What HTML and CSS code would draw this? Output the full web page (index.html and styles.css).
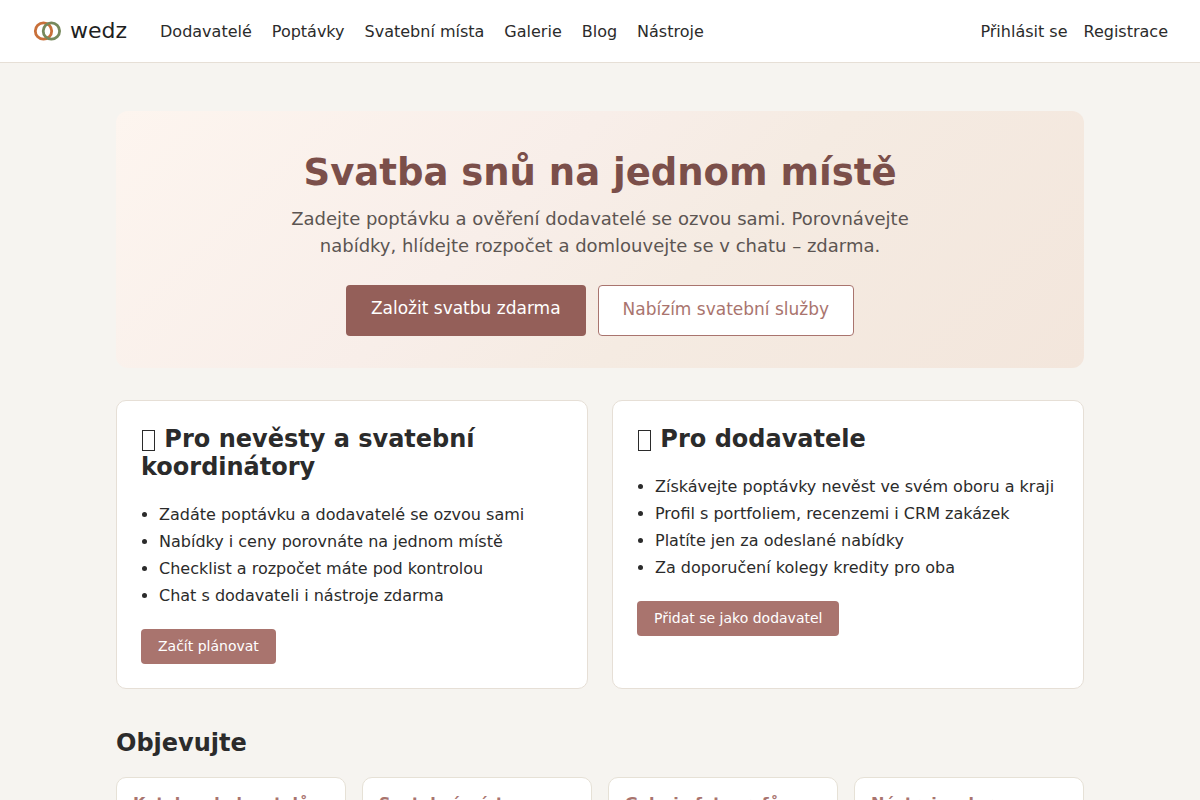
FILE: index.html
```html
<!DOCTYPE html>
<html lang="cs">
<head>
    <meta charset="UTF-8">
    <meta name="viewport" content="width=device-width, initial-scale=1.0">
    <title>wedz</title>
    <link rel="stylesheet" href="styles.css">
</head>
<body>
    <header class="header">
        <a class="logo" href="#">
            <svg width="30" height="24" viewBox="0 0 30 24" fill="none" stroke-width="2.8" aria-hidden="true">
                <circle cx="11.5" cy="12" r="8.2" stroke="#c8703a"/>
                <circle cx="19.4" cy="12" r="8.2" stroke="#76895c"/>
            </svg>
            wedz
        </a>
        <nav class="nav">
            <a href="#">Dodavatelé</a>
            <a href="#">Poptávky</a>
            <a href="#">Svatební místa</a>
            <a href="#">Galerie</a>
            <a href="#">Blog</a>
            <a href="#">Nástroje</a>
        </nav>
        <div class="account">
            <a href="#">Přihlásit se</a>
            <a href="#">Registrace</a>
        </div>
    </header>

    <main class="container">
        <section class="hero">
            <h1>Svatba snů na jednom místě</h1>
            <p>Zadejte poptávku a ověření dodavatelé se ozvou sami. Porovnávejte nabídky, hlídejte rozpočet a domlouvejte se v chatu – zdarma.</p>
            <div class="hero-actions">
                <a class="btn btn-large btn-dark" href="#">Založit svatbu zdarma</a>
                <a class="btn btn-large btn-outline" href="#">Nabízím svatební služby</a>
            </div>
        </section>

        <section class="audience">
            <div class="card">
                <h2><span class="symbol"></span> Pro nevěsty a svatební koordinátory</h2>
                <ul>
                    <li>Zadáte poptávku a dodavatelé se ozvou sami</li>
                    <li>Nabídky i ceny porovnáte na jednom místě</li>
                    <li>Checklist a rozpočet máte pod kontrolou</li>
                    <li>Chat s dodavateli i nástroje zdarma</li>
                </ul>
                <a class="btn" href="#">Začít plánovat</a>
            </div>
            <div class="card">
                <h2><span class="symbol"></span> Pro dodavatele</h2>
                <ul>
                    <li>Získávejte poptávky nevěst ve svém oboru a kraji</li>
                    <li>Profil s portfoliem, recenzemi i CRM zakázek</li>
                    <li>Platíte jen za odeslané nabídky</li>
                    <li>Za doporučení kolegy kredity pro oba</li>
                </ul>
                <a class="btn" href="#">Přidat se jako dodavatel</a>
            </div>
        </section>

        <section class="explore">
            <h2>Objevujte</h2>
            <div class="explore-grid">
                <a class="tile" href="#">Katalog dodavatelů</a>
                <a class="tile" href="#">Svatební místa</a>
                <a class="tile" href="#">Galerie fotografů</a>
                <a class="tile" href="#">Nástroje zdarma</a>
            </div>
        </section>
    </main>
</body>
</html>
```

FILE: styles.css
```css
* {
    box-sizing: border-box;
}
body {
    margin: 0;
    font-family: "DejaVu Sans", sans-serif;
    font-size: 16px;
    line-height: 27px;
    color: #2b2b2b;
    background-color: #f6f4f0;
}
a {
    color: inherit;
    text-decoration: none;
}
h1, h2, p, ul {
    margin: 0;
}
h2 {
    font-size: 24px;
    line-height: 28px;
}
.header {
    display: flex;
    align-items: center;
    padding: 16px 32px;
    background: white;
    border-bottom: 1px solid #e6dfd6;
}
.logo {
    display: flex;
    align-items: center;
    gap: 8px;
    margin-right: 33px;
    font-size: 22px;
    line-height: 30px;
    color: #1f1f1f;
}
.nav {
    display: flex;
    gap: 20px;
}
.account {
    display: flex;
    gap: 16px;
    margin-left: auto;
}
.container {
    max-width: 1000px;
    margin: 0 auto;
    padding: 48px 16px;
}
.hero {
    padding: 41px 32px 32px;
    border-radius: 12px;
    background: linear-gradient(135deg, #fdf5ef 0%, #f8eee9 40%, #f5ebe2 60%, #f3e6dc 100%);
    text-align: center;
}
.hero h1 {
    margin-bottom: 11px;
    font-size: 37px;
    line-height: 42px;
    color: #7b4f4a;
}
.hero p {
    max-width: 640px;
    margin: 0 auto 26px;
    font-size: 18px;
    color: #5c5552;
}
.hero-actions {
    display: flex;
    flex-wrap: wrap;
    justify-content: center;
    gap: 12px;
}
.btn {
    display: inline-block;
    padding: 6px 17px;
    border-radius: 4px;
    font-size: 14px;
    line-height: 23px;
    color: white;
    background-color: #a9746e;
}
.btn-large {
    padding: 9px 25px 14px;
    font-size: 17px;
    line-height: 28px;
}
.btn-dark {
    background-color: #945f59;
}
.btn-outline {
    padding: 9px 24px 12px;
    border: 1px solid #a9746e;
    color: #a9746e;
    background: white;
}
.audience {
    display: grid;
    grid-template-columns: 1fr 1fr;
    gap: 24px;
    margin-top: 32px;
}
.card {
    padding: 24px;
    border: 1px solid #e6dfd6;
    border-radius: 10px;
    background: white;
}
.card ul {
    margin: 20px 0;
    padding-left: 18px;
}
.symbol {
    display: inline-block;
    width: 13px;
    height: 21px;
    margin: 0 1px;
    border: 1px solid #2b2b2b;
    vertical-align: -4px;
}
.explore {
    margin-top: 40px;
}
.explore-grid {
    display: grid;
    grid-template-columns: repeat(4, 1fr);
    gap: 16px;
    margin-top: 20px;
}
.tile {
    padding: 12px 16px;
    border: 1px solid #e6e1d6;
    border-radius: 10px;
    font-weight: bold;
    color: #a9746e;
    background: white;
}
```
